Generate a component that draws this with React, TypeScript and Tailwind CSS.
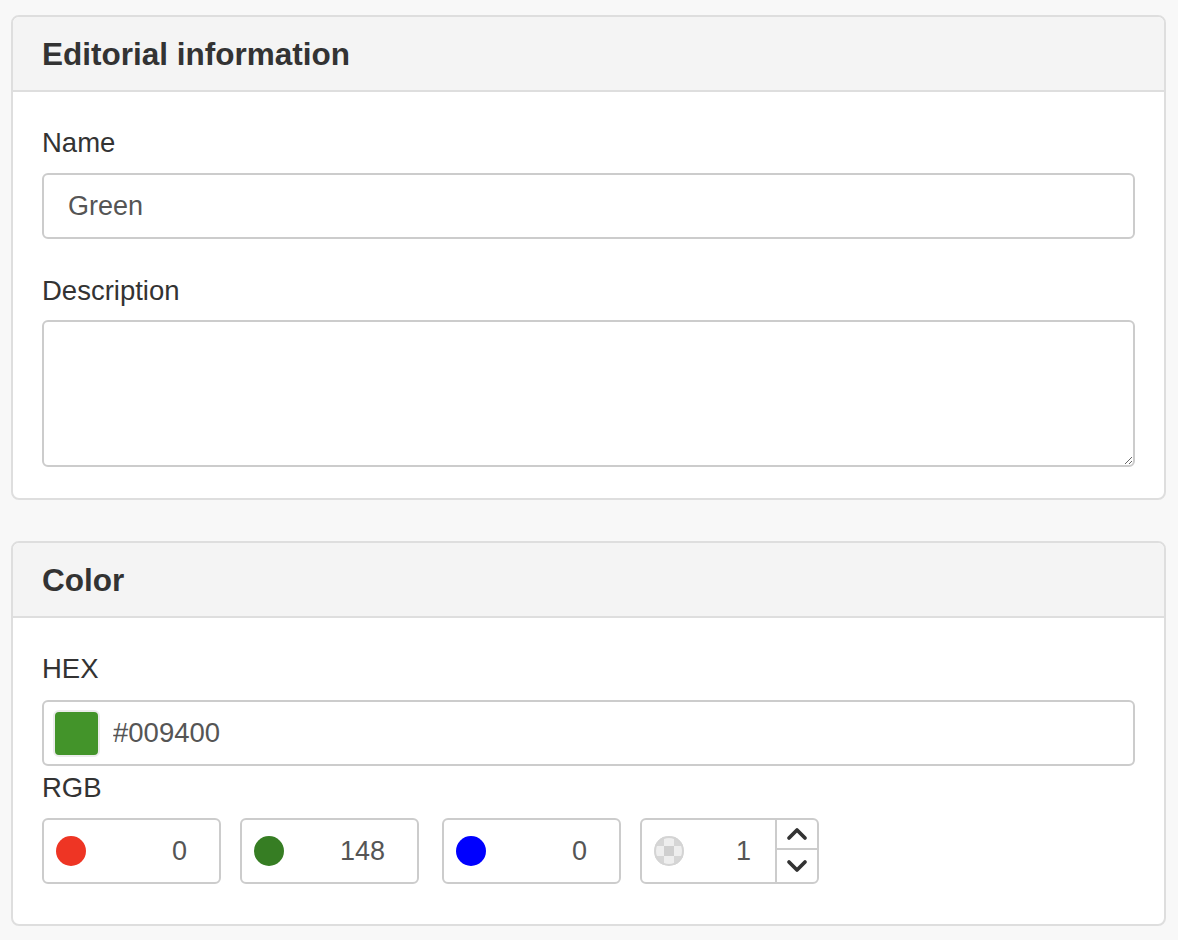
import React from "react";
import { ChevronUp, ChevronDown } from "lucide-react";

const font = { fontFamily: '"Liberation Sans", Arial, Helvetica, sans-serif' };

function Panel({ title, children, className = "" }: { title: string; children: React.ReactNode; className?: string }) {
  return (
    <section className={`rounded-[8px] border-2 border-[#dedede] bg-white ${className}`}>
      <div className="flex h-[75px] items-center rounded-t-[6px] border-b-2 border-[#dedede] bg-[#f4f4f4] px-[29px] pt-[3px]">
        <h3 className="text-[31.5px] font-bold leading-none text-[#333]">{title}</h3>
      </div>
      {children}
    </section>
  );
}

function Label({ children, className = "" }: { children: React.ReactNode; className?: string }) {
  return <label className={`block text-[27.5px] leading-[38px] text-[#333] ${className}`}>{children}</label>;
}

function Dot({ color }: { color: string }) {
  return <span className="h-[30px] w-[30px] shrink-0 rounded-full" style={{ backgroundColor: color }} />;
}

function Checker() {
  return (
    <svg width="30" height="30" viewBox="0 0 30 30" className="shrink-0">
      <defs>
        <clipPath id="alpha-clip">
          <circle cx="15" cy="15" r="15" />
        </clipPath>
      </defs>
      <g clipPath="url(#alpha-clip)">
        <rect x="0" y="0" width="30" height="30" fill="#eeeeee" />
        <rect x="10" y="10" width="10" height="10" fill="#cfcfcf" />
        <rect x="0" y="0" width="10" height="10" fill="#d6d6d6" />
        <rect x="20" y="0" width="10" height="10" fill="#d6d6d6" />
        <rect x="0" y="20" width="10" height="10" fill="#d6d6d6" />
        <rect x="20" y="20" width="10" height="10" fill="#d6d6d6" />
      </g>
      <circle cx="15" cy="15" r="14" fill="none" stroke="#d4d4d4" strokeWidth="2" />
    </svg>
  );
}

function ChannelBox({ dot, value, className = "" }: { dot: React.ReactNode; value: string; className?: string }) {
  return (
    <div className={`flex h-[66px] w-[179px] items-center rounded-[6px] border-2 border-[#cccccc] bg-white pl-[12px] pr-[32px] ${className}`}>
      {dot}
      <input
        readOnly
        value={value}
        className="w-full min-w-0 bg-transparent text-right text-[27px] text-[#555] outline-none"
      />
    </div>
  );
}

export default function App() {
  return (
    <div className="min-h-[940px] bg-[#f8f8f8] pb-[15px] pl-[11px] pr-[12px] pt-[15px]" style={font}>
      <Panel title="Editorial information">
        <div className="px-[29px] pb-[31px] pt-[32px]">
          <Label className="mb-[11px]">Name</Label>
          <input
            readOnly
            value="Green"
            className="mb-[33px] block h-[66px] w-full rounded-[6px] border-2 border-[#cccccc] bg-white px-[24px] text-[27px] text-[#555] outline-none"
          />
          <Label className="mb-[10px]">Description</Label>
          <textarea className="block h-[147px] w-full resize-y rounded-[6px] border-2 border-[#cccccc] bg-white px-[24px] py-[12px] text-[27px] text-[#555] outline-none" />
        </div>
      </Panel>

      <Panel title="Color" className="mt-[41px]">
        <div className="px-[29px] pb-[40px] pt-[32px]">
          <Label className="mb-[12px]">HEX</Label>
          <div className="mb-[3px] flex h-[66px] w-full items-center rounded-[6px] border-2 border-[#cccccc] bg-white pl-[9px]">
            <span className="h-[47px] w-[47px] shrink-0 rounded-[6px] border-2 border-[#ececec] bg-[#43942a]" />
            <input readOnly value="#009400" className="ml-[13px] w-full bg-transparent text-[27.5px] text-[#555] outline-none" />
          </div>
          <Label className="mb-[11px]">RGB</Label>
          <div className="flex items-center">
            <ChannelBox dot={<Dot color="#ee3524" />} value="0" className="mr-[19px]" />
            <ChannelBox dot={<Dot color="#367d23" />} value="148" className="mr-[23px]" />
            <ChannelBox dot={<Dot color="#0000fe" />} value="0" className="mr-[19px]" />
            <div className="flex h-[66px] w-[179px] items-stretch rounded-[6px] border-2 border-[#cccccc] bg-white">
              <div className="flex flex-1 items-center pl-[12px] pr-[24px]">
                <Checker />
                <input readOnly value="1" className="w-full min-w-0 bg-transparent text-right text-[27px] text-[#555] outline-none" />
              </div>
              <div className="flex w-[42px] flex-col border-l-2 border-[#cccccc]">
                <button className="flex h-[30px] items-center justify-center border-b-2 border-[#cccccc] text-[#333]">
                  <ChevronUp size={32} strokeWidth={2.8} />
                </button>
                <button className="flex flex-1 items-center justify-center text-[#333]">
                  <ChevronDown size={32} strokeWidth={2.8} />
                </button>
              </div>
            </div>
          </div>
        </div>
      </Panel>
    </div>
  );
}
